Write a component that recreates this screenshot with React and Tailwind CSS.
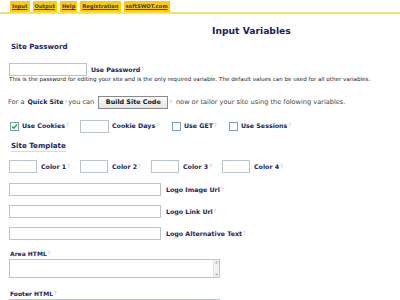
const Q = () => <sup className="text-[5px] text-[#b0b0b0] font-normal ml-px relative -top-[1px]">?</sup>;

const Label = ({ children, className = "" }) => (
  <span className={`text-[6.3px] font-bold text-[#1c1c5c] leading-none whitespace-nowrap ${className}`}>
    {children}
    <Q />
  </span>
);

const Box = ({ className = "" }) => (
  <div className={`h-[13px] shrink-0 border border-[#b9c4cc] bg-white ${className}`} />
);

const Check = ({ checked }) => (
  <div className="w-[9px] h-[9px] shrink-0 border border-[#7f9db9] bg-white flex items-center justify-center">
    {checked && (
      <svg width="7" height="7" viewBox="0 0 7 7">
        <path d="M1 3.5 L2.8 5.2 L6 1.5" stroke="#21a121" strokeWidth="1.3" fill="none" />
      </svg>
    )}
  </div>
);

const TextArea = () => (
  <div className="ml-[9px] mt-[2px] w-[211px] h-[19px] border border-[#b9c4cc] flex justify-end">
    <div className="w-[6px] bg-[#f3f3ee] border-l border-[#e2e2da] flex flex-col justify-between items-center text-[4px] text-[#bbb]">
      <span>▲</span>
      <span>▼</span>
    </div>
  </div>
);

const tabs = ["Input", "Output", "Help", "Registration", "softSWOT.com"];

export default function App() {
  return (
    <div className="w-[400px] h-[300px] overflow-hidden bg-white font-['DejaVu_Sans',Verdana,sans-serif] text-[#333] text-[6px] leading-none">
      <div className="flex items-end gap-[3px] pl-[10px] border-b-2 border-[#f3e36a] h-[14px]">
        {tabs.map((t) => (
          <div key={t} className="h-[11px] px-[2px] bg-[#ffcc00] flex items-center text-[5.2px] font-bold text-[#333366] underline">
            {t}
          </div>
        ))}
      </div>

      <div className="pl-[212px] mt-[12px] h-[9px] text-[9.2px] font-bold text-[#1c1c5c]">Input Variables</div>

      <div className="pl-[11px] mt-[8px] h-[8px] text-[7.1px] font-bold text-[#1c1c5c]">Site Password</div>

      <div className="pl-[9px] mt-[12px] flex items-center h-[13px]">
        <Box className="w-[78px]" />
        <Label className="ml-[4px] mt-[2px]">Use Password</Label>
      </div>
      <div className="pl-[9px] mt-[1px] h-[6px] text-[5.6px] text-[#222] whitespace-nowrap">
        This is the password for editing your site and is the only required variable. The default values can be used for all other variables.
      </div>

      <div className="pl-[8px] mt-[13px] h-[13px] flex items-center text-[6.6px] text-[#444] whitespace-nowrap">
        <span>For a</span>
        <span className="font-bold text-[#1c1c5c] text-[6.3px] ml-[3px]">Quick Site</span>
        <Q />
        <span className="ml-[1px]">you can</span>
        <div className="ml-[4px] w-[70px] h-[13px] shrink-0 border border-[#8a8a8a] bg-[linear-gradient(#fdfdfd,#e4e4e4)] flex items-center justify-center text-[6.4px] font-bold text-[#111]">
          Build Site Code
        </div>
        <Q />
        <span className="ml-[4px]">now or tailor your site using the folowing variables.</span>
      </div>

      <div className="pl-[10px] mt-[11px] flex items-center h-[13px]">
        <div className="w-[70px] flex items-center">
          <Check checked />
          <Label className="ml-[3px]">Use Cookies</Label>
        </div>
        <div className="w-[92px] flex items-center">
          <Box className="w-[29px]" />
          <Label className="ml-[3px]">Cookie Days</Label>
        </div>
        <div className="w-[57px] flex items-center">
          <Check />
          <Label className="ml-[3px]">Use GET</Label>
        </div>
        <div className="flex items-center">
          <Check />
          <Label className="ml-[3px]">Use Sessions</Label>
        </div>
      </div>

      <div className="pl-[11px] mt-[9px] h-[11px] flex items-start">
        <span className="text-[7.1px] font-bold text-[#1c1c5c] pb-[2px] border-b border-[#f3e36a]">Site Template</span>
      </div>

      <div className="pl-[9px] mt-[7px] flex items-center h-[13px]">
        {[1, 2, 3, 4].map((n) => (
          <div key={n} className="flex items-center w-[71px]">
            <Box className="w-[28px]" />
            <Label className="ml-[4px] mt-[2px]">Color {n}</Label>
          </div>
        ))}
      </div>

      {["Logo Image Url", "Logo Link Url", "Logo Alternative Text"].map((l, i) => (
        <div key={l} className={`pl-[9px] flex items-center h-[13px] ${i === 0 ? "mt-[10px]" : "mt-[9px]"}`}>
          <Box className="w-[152px]" />
          <Label className="ml-[5px] mt-[1px]">{l}</Label>
        </div>
      ))}

      <div className="pl-[10px] mt-[11px] h-[6px] flex items-end">
        <Label className="text-[6px]">Area HTML</Label>
      </div>
      <TextArea />

      <div className="pl-[10px] mt-[13px] h-[6px] flex items-end">
        <Label className="text-[6px]">Footer HTML</Label>
      </div>
      <TextArea />
    </div>
  );
}
